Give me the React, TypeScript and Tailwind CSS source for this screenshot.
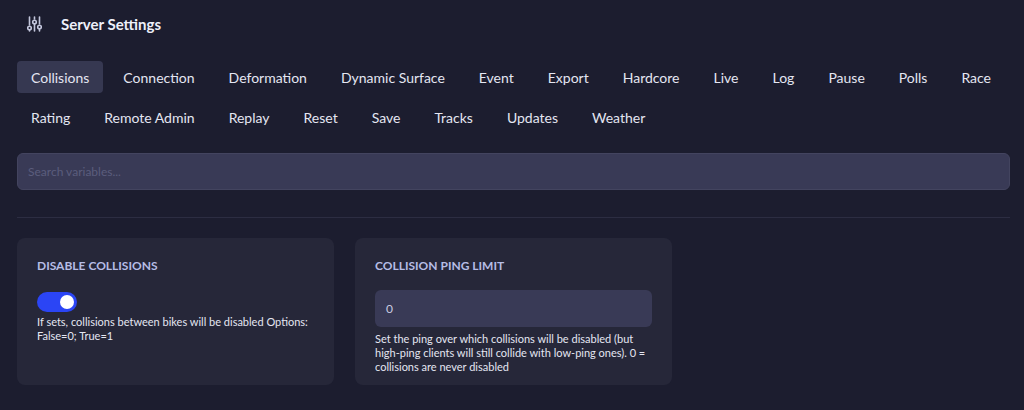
import React from "react";

const tabs1 = ["Collisions","Connection","Deformation","Dynamic Surface","Event","Export","Hardcore","Live","Log","Pause","Polls","Race"];
const tabs2 = ["Rating","Remote Admin","Replay","Reset","Save","Tracks","Updates","Weather"];

function Row({ items, first }: { items: string[]; first?: boolean }) {
  return (
    <div className="flex gap-x-[6px] whitespace-nowrap">
      {items.map((t, i) => (
        <div key={t} className={`h-[32px] px-[14px] flex items-center text-[14px] rounded-[4px] ${first && i === 0 ? "bg-[#363851]" : ""}`}>{t}</div>
      ))}
    </div>
  );
}

export default function App() {
  return (
    <div className="h-[410px] overflow-hidden w-[1024px] bg-[#1c1d2f] text-[#e4e6f2] px-[17px]" style={{ fontFamily: 'Lato, "Noto Sans", sans-serif' }}>
      <div className="flex items-center h-[48px] pl-[10px] gap-[19px]">
        <svg width="15" height="16" viewBox="0 0 15 16" fill="none" stroke="#c3c6dc" strokeWidth="1.6" strokeLinecap="round">
          <line x1="2.5" y1="1" x2="2.5" y2="9" />
          <circle cx="2.5" cy="12" r="1.8" />
          <line x1="2.5" y1="14.5" x2="2.5" y2="15" />
          <line x1="7.5" y1="1" x2="7.5" y2="3" />
          <circle cx="7.5" cy="6" r="1.8" />
          <line x1="7.5" y1="8.5" x2="7.5" y2="15" />
          <line x1="12.5" y1="1" x2="12.5" y2="8" />
          <circle cx="12.5" cy="11" r="1.8" />
          <line x1="12.5" y1="13.5" x2="12.5" y2="15" />
        </svg>
        <span className="text-[15px] font-bold text-[#eef0fa]">Server Settings</span>
      </div>
      <div className="flex flex-col gap-y-[8px] mt-[13px]">
        <Row items={tabs1} first />
        <Row items={tabs2} />
      </div>
      <div className="mt-[20px] h-[37px] rounded-[6px] bg-[#393a56] border border-[#43445f] flex items-center px-[10px] text-[12px] text-[#5b5d7d] w-[993px]">
        Search variables...
      </div>
      <div className="mt-[27px] border-t border-[#2c2d42] w-[993px]" />
      <div className="flex gap-[21px] mt-[20px]">
        <div className="w-[317px] h-[147px] rounded-[8px] bg-[#262739] px-[20px] pt-[19px]">
          <div className="text-[12px] font-bold text-[#b6bde6]">DISABLE COLLISIONS</div>
          <div className="mt-[17px] w-[40px] h-[20px] rounded-full bg-[#2b45f5] relative">
            <div className="absolute right-[3px] top-[3px] w-[14px] h-[14px] rounded-full bg-white" />
          </div>
          <div className="mt-[3px] text-[11px] leading-[14px] text-[#e4e6f2]">If sets, collisions between bikes will be disabled Options: False=0; True=1</div>
        </div>
        <div className="w-[317px] h-[147px] rounded-[8px] bg-[#262739] px-[20px] pt-[19px]">
          <div className="text-[12px] font-bold text-[#b6bde6]">COLLISION PING LIMIT</div>
          <div className="mt-[15px] h-[37px] rounded-[6px] bg-[#393a56] flex items-center px-[11px] text-[12px] text-[#c9cce2]">0</div>
          <div className="mt-[5px] text-[11px] leading-[14px] text-[#e4e6f2]">Set the ping over which collisions will be disabled (but high-ping clients will still collide with low-ping ones). 0 = collisions are never disabled</div>
        </div>
      </div>
    </div>
  );
}
